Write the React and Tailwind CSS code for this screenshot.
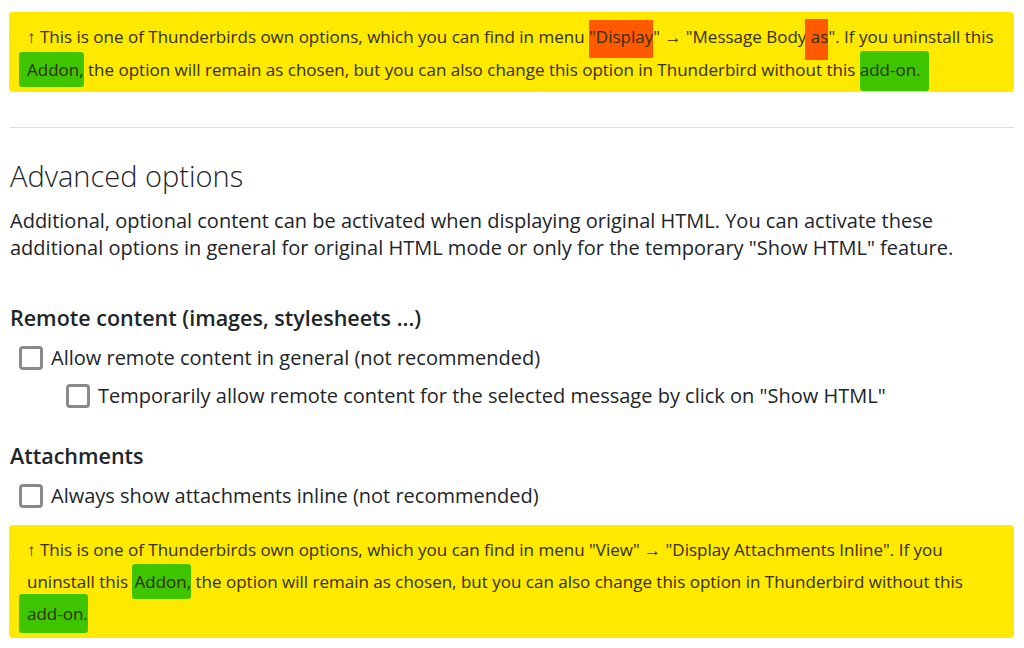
import React from "react";

const font = { fontFamily: '"Segoe UI", "Open Sans", "Noto Sans", sans-serif' };

function Orange({ children, className = "" }) {
  return <span className={"bg-[#ff5a00] " + className}>{children}</span>;
}
function Green({ children, className = "" }) {
  return <span className={"bg-[#3fc400] rounded-[3px] " + className}>{children}</span>;
}

function Check({ children, indent = false }) {
  return (
    <label className={"flex items-center gap-[8px] " + (indent ? "pl-[56px]" : "pl-[9px]")}>
      <span className="block w-[24px] h-[24px] border-[3px] border-[#8a8a8a] rounded-[4px] bg-white shrink-0" />
      <span className="text-[20px] text-[#212529] leading-[28px]">{children}</span>
    </label>
  );
}

export default function App() {
  return (
    <div className="w-[1024px] h-[648px] bg-white overflow-hidden px-[10px] pt-[12px]" style={font}>
      <div className="bg-[#ffe900] rounded-[4px] pl-[18px] pr-[10px] pt-[8px] pb-[6px] text-[17px] leading-[33px] text-[#332f00] ml-[-1px]">
        ↑ This is one of Thunderbirds own options, which you can find in menu{" "}
        <Orange className="pt-[5px] pb-[10px]">"Display</Orange>" → "Message Body{" "}
        <Orange className="pt-[6px] pb-[12px] ml-[-6px] pl-[6px]">as</Orange>". If you uninstall this{" "}
        <Green className="py-[6px] ml-[-8px] pl-[8px]">Addon,</Green> the option will remain as chosen, but you can also change this option in Thunderbird without this{" "}
        <Green className="pt-[7px] pb-[10px] pr-[8px]">add-on.</Green>
      </div>

      <div className="mt-[35px] border-t border-[#dcdcdc]" />

      <h2 className="mt-[30px] text-[29px] font-light leading-[36px] text-[#212529]">Advanced options</h2>
      <p className="mt-[13px] max-w-[960px] text-[20px] leading-[27px] text-[#212529]">
        Additional, optional content can be activated when displaying original HTML. You can activate these additional options in general for original HTML mode or only for the temporary "Show HTML" feature.
      </p>

      <h5 className="mt-[43px] text-[21.5px] font-semibold leading-[28px] text-[#212529]">Remote content (images, stylesheets ...)</h5>
      <div className="mt-[12px] flex flex-col gap-[10px]">
        <Check>Allow remote content in general (not recommended)</Check>
        <Check indent>Temporarily allow remote content for the selected message by click on "Show HTML"</Check>
      </div>

      <h5 className="mt-[32px] text-[21.5px] font-semibold leading-[28px] text-[#212529]">Attachments</h5>
      <div className="mt-[12px]">
        <Check>Always show attachments inline (not recommended)</Check>
      </div>

      <div className="mt-[15px] bg-[#ffe900] rounded-[4px] pl-[18px] pr-[10px] pt-[9px] pb-[8px] text-[17px] leading-[32px] text-[#332f00] ml-[-1px]">
        ↑ This is one of Thunderbirds own options, which you can find in menu "View" → "Display Attachments Inline". If you uninstall this{" "}
        <Green className="py-[6px] pl-[2px]">Addon,</Green> the option will remain as chosen, but you can also change this option in Thunderbird without this
        <br />
        <Green className="py-[8px] ml-[-8px] pl-[8px]">add-on.</Green>
      </div>
    </div>
  );
}
